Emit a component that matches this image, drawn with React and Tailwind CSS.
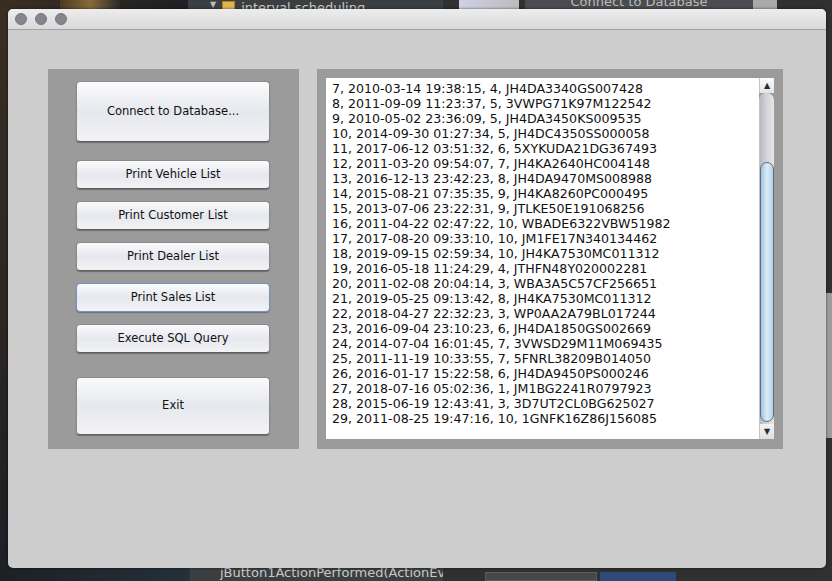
import React from 'react'

const rows = [
    '7, 2010-03-14 19:38:15, 4, JH4DA3340GS007428',
    '8, 2011-09-09 11:23:37, 5, 3VWPG71K97M122542',
    '9, 2010-05-02 23:36:09, 5, JH4DA3450KS009535',
    '10, 2014-09-30 01:27:34, 5, JH4DC4350SS000058',
    '11, 2017-06-12 03:51:32, 6, 5XYKUDA21DG367493',
    '12, 2011-03-20 09:54:07, 7, JH4KA2640HC004148',
    '13, 2016-12-13 23:42:23, 8, JH4DA9470MS008988',
    '14, 2015-08-21 07:35:35, 9, JH4KA8260PC000495',
    '15, 2013-07-06 23:22:31, 9, JTLKE50E191068256',
    '16, 2011-04-22 02:47:22, 10, WBADE6322VBW51982',
    '17, 2017-08-20 09:33:10, 10, JM1FE17N340134462',
    '18, 2019-09-15 02:59:34, 10, JH4KA7530MC011312',
    '19, 2016-05-18 11:24:29, 4, JTHFN48Y020002281',
    '20, 2011-02-08 20:04:14, 3, WBA3A5C57CF256651',
    '21, 2019-05-25 09:13:42, 8, JH4KA7530MC011312',
    '22, 2018-04-27 22:32:23, 3, WP0AA2A79BL017244',
    '23, 2016-09-04 23:10:23, 6, JH4DA1850GS002669',
    '24, 2014-07-04 16:01:45, 7, 3VWSD29M11M069435',
    '25, 2011-11-19 10:33:55, 7, 5FNRL38209B014050',
    '26, 2016-01-17 15:22:58, 6, JH4DA9450PS000246',
    '27, 2018-07-16 05:02:36, 1, JM1BG2241R0797923',
    '28, 2015-06-19 12:43:41, 3, 3D7UT2CL0BG625027',
    '29, 2011-08-25 19:47:16, 10, 1GNFK16Z86J156085',
]

function AquaButton({ label, className = '', focused = false }) {
    return (
        <button
            className={`w-[194px] rounded-[4px] border bg-gradient-to-b from-[#fbfbfc] via-[#e6e8ee] to-[#f3f3f5] text-[11.5px] text-[#111] shadow-[0_1px_1px_rgba(0,0,0,0.3)] flex items-center justify-center ${focused ? 'border-[#6f93c4] shadow-[0_0_2px_#8fb0dc]' : 'border-[#8a8a8a] border-b-[#5e5e5e]'} ${className}`}
        >
            {label}
        </button>
    )
}

export default function App() {
    return (
        <div className="relative w-[832px] h-[581px] overflow-hidden bg-[#2e3032] font-['DejaVu_Sans',sans-serif]">
            {/* ===== desktop behind the window ===== */}
            <div className="absolute left-0 top-0 w-[188px] h-full bg-gradient-to-br from-[#3a2e22] via-[#1e2024] to-[#24303a]" />
            <div className="absolute left-[60px] top-0 w-[60px] h-[9px] bg-gradient-to-r from-[#4a3a24] via-[#8a6a3a] to-[#2a2a2a]" />
            <div className="absolute left-[188px] top-0 w-[255px] h-[9px] bg-[#3c3f41] overflow-hidden">
                <div className="flex items-end h-full gap-[6px] pl-[22px]">
                    <span className="text-[8px] leading-[8px] text-[#bbb]">▼</span>
                    <span className="w-[13px] h-[10px] bg-[#e0b550] border border-[#b08020] mb-[-2px]" />
                    <span className="text-[13px] leading-[13px] text-[#c8c8c8] mb-[-5px]">interval.scheduling</span>
                </div>
            </div>
            <div className="absolute left-[459px] top-0 w-[60px] h-[9px] bg-gradient-to-r from-[#cfd0e6] to-[#bcbcbc]" />
            <div className="absolute left-[525px] top-0 w-[228px] h-[9px] bg-[#4a4c4f] overflow-hidden flex justify-center">
                <span className="text-[13px] leading-[13px] text-[#bcbcbc] mt-[-5px]">Connect to Database</span>
            </div>
            <div className="absolute left-[753px] top-0 w-[24px] h-[9px] bg-[#a9a9a9]" />
            <div className="absolute left-[826px] top-[293px] w-[6px] h-[145px] bg-[#9c9c9c]" />
            <div className="absolute left-[190px] top-[568px] w-[253px] h-[13px] bg-[#3c3f41] overflow-hidden flex items-start gap-[6px] pl-[24px]">
                <span className="w-[10px] h-[10px] rounded-full bg-[#e07a5a] mt-[1px]" />
                <span className="text-[13px] leading-[13px] text-[#c8c8c8] mt-[-2px]">jButton1ActionPerformed(ActionEve</span>
            </div>
            <div className="absolute left-[485px] top-[572px] w-[112px] h-[9px] bg-[#45484b] border border-[#5a5d60]" />
            <div className="absolute left-[600px] top-[572px] w-[76px] h-[9px] bg-[#2e4a78]" />

            {/* ===== window ===== */}
            <div className="absolute left-[8px] top-[9px] w-[818px] h-[559px] rounded-[5px] overflow-hidden bg-[#cdcdcd] flex flex-col shadow-[0_0_3px_rgba(0,0,0,0.6)]">
                {/* title bar */}
                <div className="h-[21px] shrink-0 bg-gradient-to-b from-[#ededed] to-[#d9d9d9] border-b border-[#a3a3a3] flex items-center gap-[8px] pl-[7px]">
                    <span className="w-[12px] h-[12px] rounded-full bg-[#85858c] border border-[#75757b]" />
                    <span className="w-[12px] h-[12px] rounded-full bg-[#85858c] border border-[#75757b]" />
                    <span className="w-[12px] h-[12px] rounded-full bg-[#85858c] border border-[#75757b]" />
                </div>

                {/* body */}
                <div className="flex gap-[18px] pl-[40px] pt-[39px]">
                    {/* button panel */}
                    <div className="w-[251px] h-[380px] bg-[#9b9b9b] flex flex-col pl-[28px] pt-[12px]">
                        <AquaButton label="Connect to Database..." className="h-[61px]" />
                        <AquaButton label="Print Vehicle List" className="h-[29px] mt-[18px]" />
                        <AquaButton label="Print Customer List" className="h-[29px] mt-[12px]" />
                        <AquaButton label="Print Dealer List" className="h-[29px] mt-[12px]" />
                        <AquaButton label="Print Sales List" className="h-[29px] mt-[12px]" focused />
                        <AquaButton label="Execute SQL Query" className="h-[29px] mt-[12px]" />
                        <AquaButton label="Exit" className="h-[58px] mt-[24px]" />
                    </div>

                    {/* output panel */}
                    <div className="w-[466px] h-[380px] bg-[#9b9b9b] pt-[9px] pl-[9px]">
                        <div className="flex w-[448px] h-[361px]">
                            <div className="w-[433px] h-full bg-white overflow-hidden pl-[6px] pt-[3px]">
                                {rows.map((r) => (
                                    <div key={r} className="text-[12.6px] leading-[15px] text-[#111] whitespace-nowrap">
                                        {r}
                                    </div>
                                ))}
                            </div>

                            {/* scroll bar */}
                            <div className="w-[15px] h-full flex flex-col">
                                <div className="h-[15px] bg-gradient-to-b from-[#fafafa] to-[#e4e4e4] border-l border-[#c4c4c4] flex items-center justify-center text-[8px] text-[#2a2a2a]">▲</div>
                                <div className="flex-1 bg-gradient-to-r from-[#b9b9c1] via-[#d4d4da] to-[#e6e6ea] rounded-t-[7px] border-l border-[#c4c4c4]">
                                    <div className="mt-[69px] h-[260px] rounded-full border border-[#546d88] bg-gradient-to-r from-[#a5c3d8] via-[#dcedf8] to-[#b4d0e4]" />
                                </div>
                                <div className="h-[15px] bg-gradient-to-b from-[#f2f2f2] to-[#e0e0e0] border-l border-[#c4c4c4] flex items-center justify-center text-[8px] text-[#2a2a2a]">▼</div>
                            </div>
                        </div>
                    </div>
                </div>
            </div>
        </div>
    )
}
